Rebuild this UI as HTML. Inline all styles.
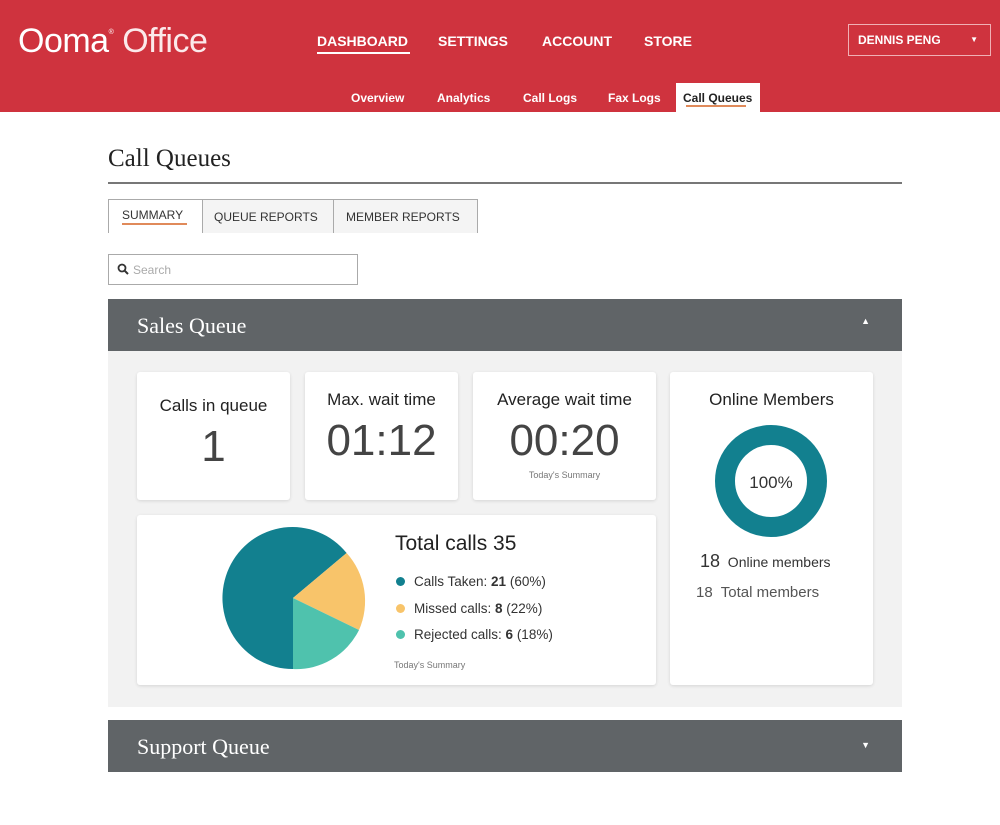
<!DOCTYPE html>
<html><head><meta charset="utf-8"><style>
*{margin:0;padding:0;box-sizing:border-box}
body{width:1000px;height:825px;background:#fff;font-family:"Liberation Sans",sans-serif;color:#222;position:relative;overflow:hidden}
.hdr{position:absolute;left:0;top:0;width:1000px;height:112px;background:#cf333e}
.abs{position:absolute}
.logo{left:18px;top:22px;color:#fff;font-size:34px;letter-spacing:-0.5px}
.nav{top:33px;color:#fff;font-size:14px;font-weight:bold}
.sub{top:91px;color:#fff;font-size:12px;font-weight:bold}
.card{position:absolute;background:#fff;box-shadow:0 1px 3px rgba(0,0,0,.12);border-radius:3px;text-align:center}
.serif{font-family:"Liberation Serif",serif}
.big{font-size:44px;color:#444;font-weight:300}
.ttl{font-size:17px;color:#222}
.bar{position:absolute;left:108px;width:794px;height:52px;background:#606467;color:#fff;font-size:22px;font-family:"Liberation Serif",serif;padding:14px 0 0 29px}
.dot{display:inline-block;width:9px;height:9px;border-radius:50%;margin-right:9px}
.leg{position:absolute;left:396px;font-size:13.5px;color:#333}
</style></head><body>
<div class="hdr"></div>
<div class="abs logo">Ooma<sup style="font-size:7px;vertical-align:18px">®</sup><span style="color:#fbe9ea"> Office</span></div>
<div class="abs nav" style="left:317px">DASHBOARD</div>
<div class="abs" style="left:317px;top:52px;width:93px;height:2px;background:#fff"></div>
<div class="abs nav" style="left:438px">SETTINGS</div>
<div class="abs nav" style="left:542px">ACCOUNT</div>
<div class="abs nav" style="left:644px">STORE</div>
<div class="abs" style="left:848px;top:24px;width:143px;height:32px;border:1.5px solid #f0b0b5;color:#fff;font-size:12px;font-weight:bold;padding:8px 0 0 9px">DENNIS PENG<span style="position:absolute;right:12px;top:10px;font-size:8px">▼</span></div>
<div class="abs sub" style="left:351px">Overview</div>
<div class="abs sub" style="left:437px">Analytics</div>
<div class="abs sub" style="left:523px">Call Logs</div>
<div class="abs sub" style="left:608px">Fax Logs</div>
<div class="abs" style="left:676px;top:83px;width:84px;height:29px;background:#fff"></div>
<div class="abs sub" style="left:683px;color:#222">Call Queues</div>
<div class="abs" style="left:686px;top:105px;width:60px;height:2px;background:#e08a5a"></div>

<div class="abs serif" style="left:108px;top:145px;font-size:25px;color:#222">Call Queues</div>
<div class="abs" style="left:108px;top:182px;width:794px;height:2px;background:#777"></div>
<div class="abs" style="left:108px;top:199px;width:370px;height:34px;border:1px solid #aaa;border-bottom:none;background:#f4f4f4"></div>
<div class="abs" style="left:109px;top:200px;width:93px;height:33px;background:#fff"></div>
<div class="abs" style="left:202px;top:199px;width:1px;height:34px;background:#aaa"></div>
<div class="abs" style="left:333px;top:199px;width:1px;height:34px;background:#aaa"></div>
<div class="abs" style="left:122px;top:208px;font-size:12px;color:#333">SUMMARY</div>
<div class="abs" style="left:122px;top:223px;width:65px;height:2px;background:#e08a5a"></div>
<div class="abs" style="left:214px;top:210px;font-size:12px;color:#333">QUEUE REPORTS</div>
<div class="abs" style="left:346px;top:210px;font-size:12px;color:#333">MEMBER REPORTS</div>
<div class="abs" style="left:108px;top:254px;width:250px;height:31px;border:1.5px solid #aaa"></div>
<svg class="abs" style="left:117px;top:263px" width="12" height="12" viewBox="0 0 12 12"><circle cx="5" cy="5" r="3.5" fill="none" stroke="#333" stroke-width="1.8"/><path d="M7.5 7.5L11 11" stroke="#333" stroke-width="2"/></svg>
<div class="abs" style="left:133px;top:263px;font-size:12px;color:#aaa">Search</div>

<div class="bar" style="top:299px">Sales Queue<span style="position:absolute;right:32px;top:17px;font-size:9px;font-family:'Liberation Sans'">▲</span></div>
<div class="abs" style="left:108px;top:351px;width:794px;height:356px;background:#f2f2f2"></div>
<div class="card" style="left:137px;top:372px;width:153px;height:128px"><div class="ttl" style="margin-top:24px">Calls in queue</div><div class="big" style="margin-top:6px">1</div></div>
<div class="card" style="left:305px;top:372px;width:153px;height:128px"><div class="ttl" style="margin-top:18px">Max. wait time</div><div class="big" style="margin-top:6px">01:12</div></div>
<div class="card" style="left:473px;top:372px;width:183px;height:128px"><div class="ttl" style="margin-top:18px">Average wait time</div><div class="big" style="margin-top:6px">00:20</div><div style="font-size:9px;color:#777;margin-top:4px">Today's Summary</div></div>
<div class="card" style="left:670px;top:372px;width:203px;height:313px"><div class="ttl" style="margin-top:18px">Online Members</div></div>
<svg class="abs" style="left:715px;top:425px" width="112" height="112"><circle cx="56" cy="56" r="46" fill="none" stroke="#12808f" stroke-width="20"/><text x="56" y="63" text-anchor="middle" font-size="17" fill="#333" font-family="Liberation Sans">100%</text></svg>
<div class="abs" style="left:700px;top:551px;font-size:14px;color:#333"><b style="font-size:18px;font-weight:normal">18</b>&nbsp; Online members</div>
<div class="abs" style="left:696px;top:584px;font-size:15px;color:#555">18&nbsp; Total members</div>

<div class="card" style="left:137px;top:515px;width:519px;height:170px"></div>
<svg class="abs" style="left:0;top:0" width="1000" height="825"><path d="M293 598L346.6 553A70 71 0 1 0 293 669Z" fill="#12808f"/><path d="M293 598L346.6 553A70 71 0 0 1 359 630Z" fill="#f8c46a"/><path d="M293 598L359 630A70 71 0 0 1 293 669Z" fill="#4fc2ad"/></svg>
<div class="abs" style="left:395px;top:532px;font-size:21px;color:#222">Total calls 35</div>
<div class="leg" style="top:574px"><span class="dot" style="background:#12808f"></span>Calls Taken: <b>21</b> (60%)</div>
<div class="leg" style="top:601px"><span class="dot" style="background:#f8c46a"></span>Missed calls: <b>8</b> (22%)</div>
<div class="leg" style="top:627px"><span class="dot" style="background:#4fc2ad"></span>Rejected calls: <b>6</b> (18%)</div>
<div class="abs" style="left:394px;top:660px;font-size:9px;color:#777">Today's Summary</div>

<div class="bar" style="top:720px">Support Queue<span style="position:absolute;right:32px;top:20px;font-size:9px;font-family:'Liberation Sans'">▼</span></div>
</body></html>
